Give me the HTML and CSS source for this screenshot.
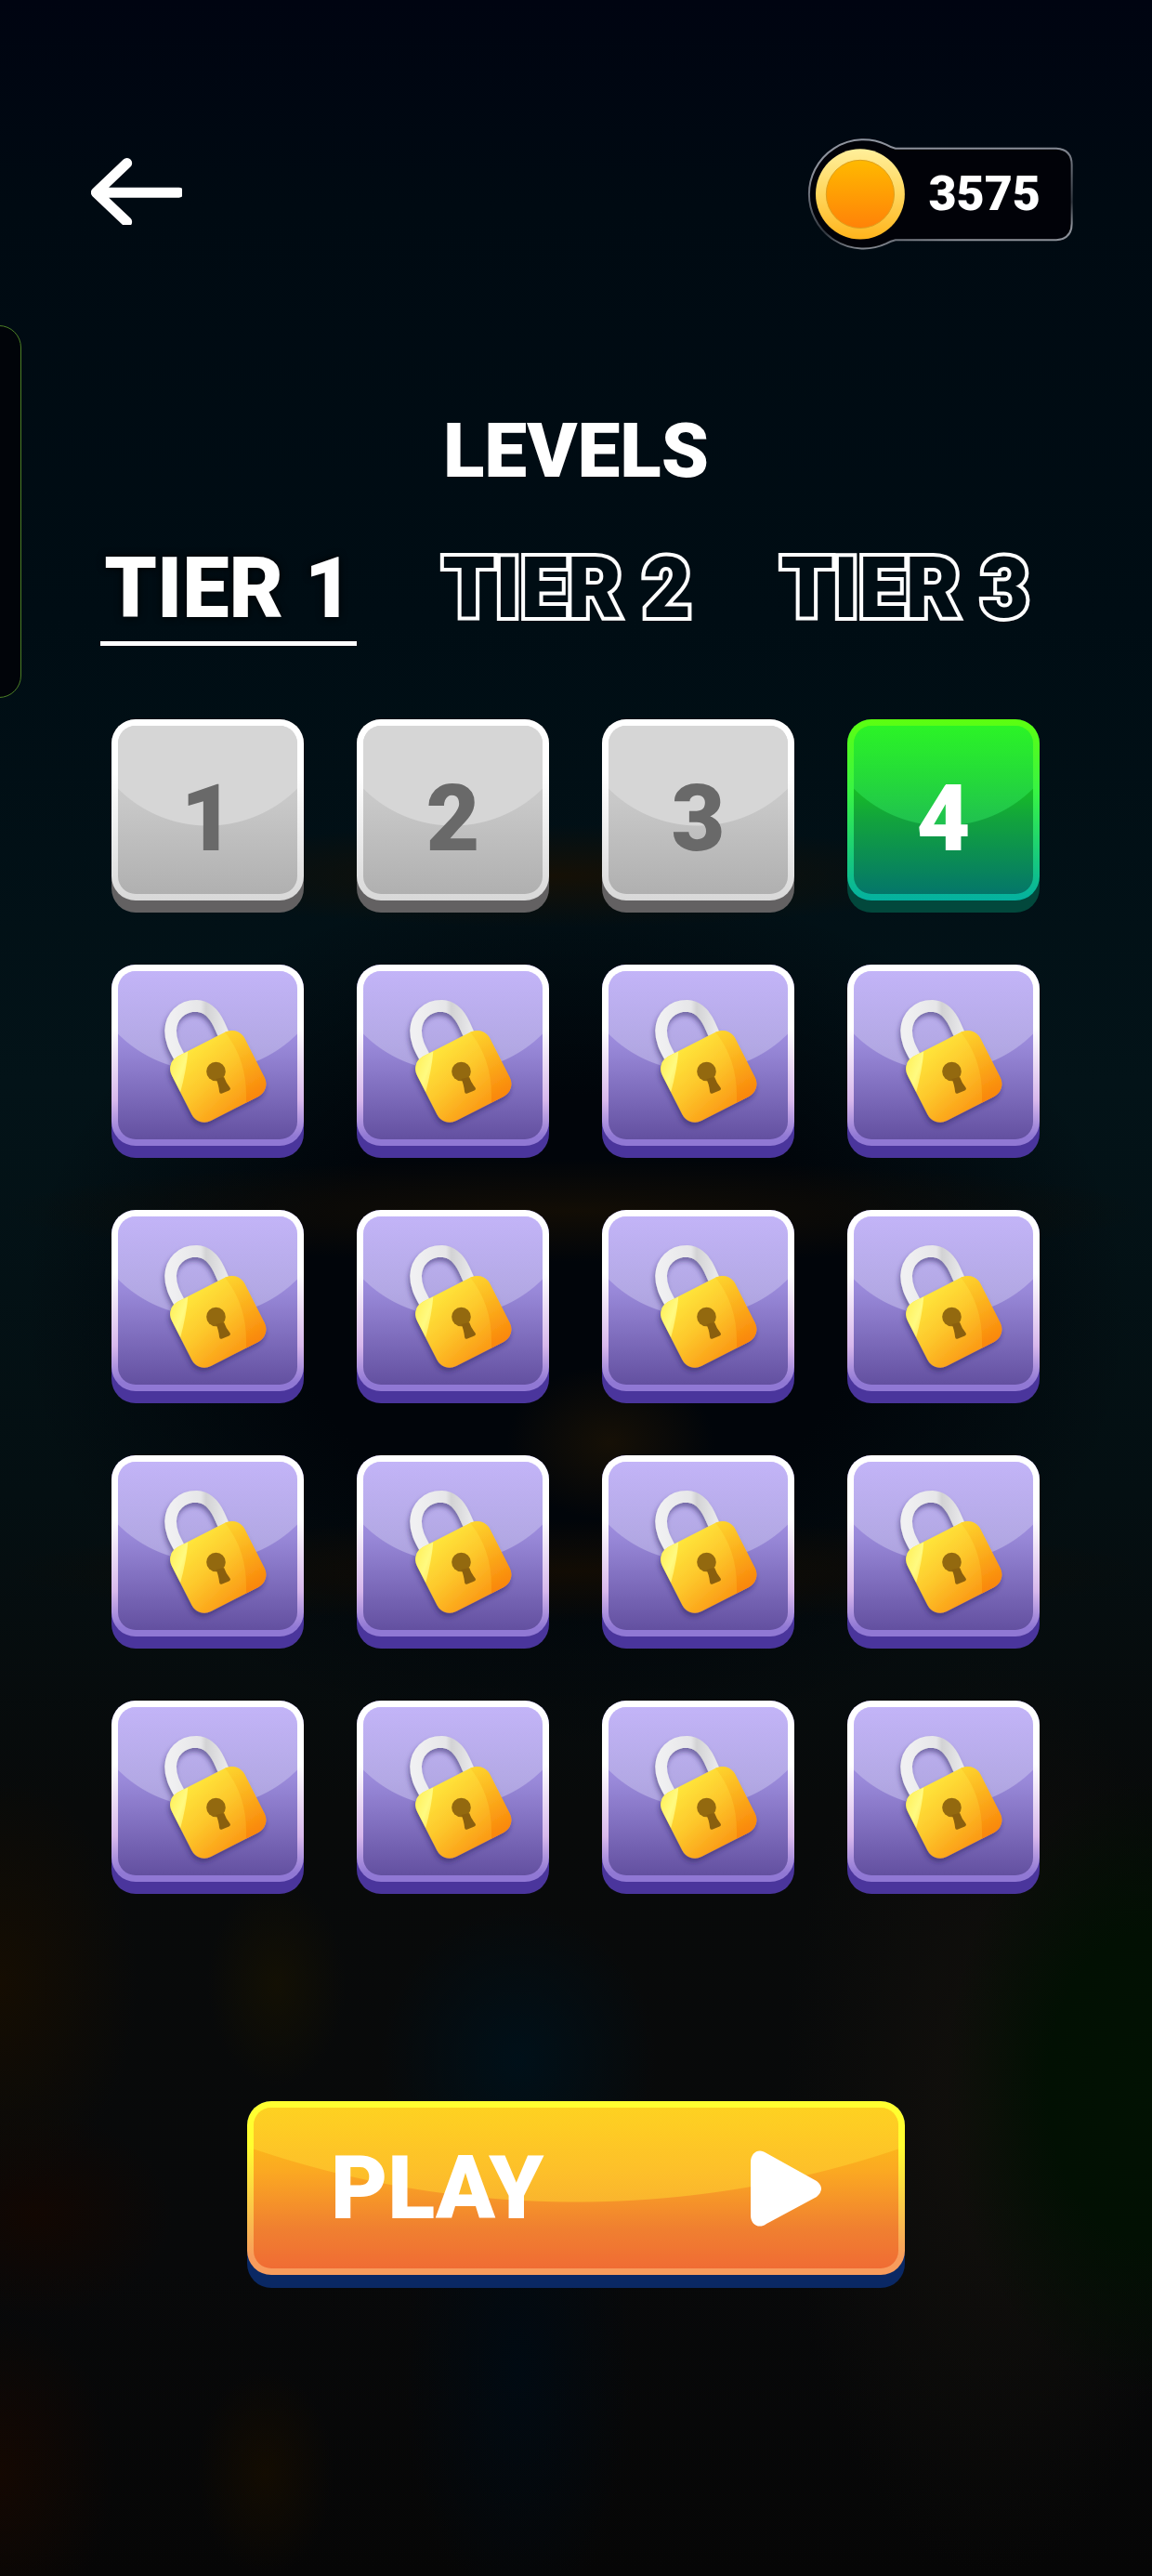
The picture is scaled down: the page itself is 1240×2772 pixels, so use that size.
FILE: index.html
```html
<!DOCTYPE html>
<html lang="en">
<head>
<meta charset="utf-8">
<meta name="viewport" content="width=device-width, initial-scale=1">
<title>Levels</title>
<link rel="stylesheet" href="styles.css">
</head>
<body>
<svg class="defs" aria-hidden="true">
  <defs>
    <linearGradient id="body" x1="0.2" y1="0" x2="0.5" y2="1"><stop offset="0" stop-color="#ffe83c"/><stop offset="0.5" stop-color="#fdc82c"/><stop offset="1" stop-color="#fb9c16"/></linearGradient>
    <linearGradient id="edge" x1="0" y1="0" x2="0" y2="1"><stop offset="0" stop-color="#fdd32c"/><stop offset="1" stop-color="#f97f06"/></linearGradient>
    <linearGradient id="shine" x1="0" y1="0" x2="0.7" y2="1"><stop offset="0" stop-color="#ffee50"/><stop offset="0.5" stop-color="#fffa80"/><stop offset="1" stop-color="#ffd83a"/></linearGradient>
    <linearGradient id="steel" x1="0" y1="0" x2="1" y2="0"><stop offset="0" stop-color="#f0f0f2"/><stop offset="0.55" stop-color="#e6e6e8"/><stop offset="0.65" stop-color="#d2d2d4"/><stop offset="1" stop-color="#e8e8ea"/></linearGradient>
    <filter id="drop" x="-20%" y="-20%" width="140%" height="150%"><feDropShadow dx="-4" dy="12" stdDeviation="8" flood-color="#2c1e5c" flood-opacity="0.5"/></filter>
    <clipPath id="bodyClip"><rect x="-132" y="-117" width="264" height="234" rx="46"/></clipPath>
  </defs>
  <symbol id="lock" viewBox="81 76 580 543">
    <g filter="url(#drop)">
      <path d="M282 358C262 322 251 300 251 268C253 222 285 188 335 188C375 190 395 220 408 248L428 292" fill="none" stroke="url(#steel)" stroke-width="38"/>
      <g transform="translate(405 416) rotate(-27)">
        <rect x="-132" y="-117" width="264" height="234" rx="46" fill="url(#body)"/>
        <g clip-path="url(#bodyClip)">
          <path d="M84 -120Q110 0 40 120H140V-120Z" fill="url(#edge)" opacity="0.75"/>
          <path d="M-132 -10V-70Q-132 -117 -84 -117H-50Q-82 -65 -132 -10Z" fill="url(#shine)"/>
        </g>
      </g>
    </g>
    <circle cx="398" cy="400" r="31" fill="#93690f"/>
    <path d="M398 424Q406 440 409 466Q411 474 418 471L440 462Q447 458 443 452Q430 436 424 418Z" fill="#8a5f0e"/>
  </symbol>
</svg>

<aside class="side-panel" aria-hidden="true"></aside>

<main class="screen">
  <header class="top-bar">
    <button class="back" type="button" aria-label="Back">
      <svg viewBox="114 118 294 215" aria-hidden="true"><path d="M230 134L130 229L230 324M132 229H398" fill="none" stroke="#fff" stroke-width="33" stroke-linecap="round" stroke-linejoin="round"/><path d="M118 229L150 200V258Z" fill="#fff"/></svg>
    </button>
    <div class="coins">
      <svg class="coins-frame" viewBox="60 52 862 364" aria-hidden="true">
        <defs>
          <linearGradient id="frame" x1="0" y1="0" x2="0.3" y2="1"><stop offset="0" stop-color="#9095a0"/><stop offset="0.3" stop-color="#8a8e98"/><stop offset="0.8" stop-color="#30363e"/><stop offset="1" stop-color="#8c9098"/></linearGradient>
          <linearGradient id="rim" x1="0" y1="0" x2="0" y2="1"><stop offset="0" stop-color="#ffef9a"/><stop offset="0.5" stop-color="#ffd65c"/><stop offset="1" stop-color="#ffb41c"/></linearGradient>
          <linearGradient id="coin" x1="0" y1="0" x2="0" y2="1"><stop offset="0" stop-color="#ffb900"/><stop offset="1" stop-color="#ff8208"/></linearGradient>
        </defs>
        <path d="M345 87H865Q915 90 915 140V330Q915 380 865 383H345Q330 386 315 395A176 176 0 1 1 315 75Q330 84 345 87Z" fill="#010208" stroke="url(#frame)" stroke-width="6"/>
        <ellipse cx="231" cy="235" rx="144" ry="146" fill="url(#rim)"/>
        <circle cx="231" cy="235" r="110" fill="url(#coin)" stroke="#dda01e" stroke-width="3"/>
      </svg>
      <span class="coins-value">3575</span>
    </div>
  </header>

  <h1 class="title">LEVELS</h1>

  <nav class="tiers" aria-label="Tiers">
    <button class="tier tier-active" type="button" aria-current="true">TIER 1</button>
    <button class="tier" type="button">TIER 2</button>
    <button class="tier" type="button">TIER 3</button>
  </nav>

  <section class="levels" aria-label="Levels">
    <button class="level done" type="button"><span class="face">1</span></button>
    <button class="level done" type="button"><span class="face">2</span></button>
    <button class="level done" type="button"><span class="face">3</span></button>
    <button class="level current" type="button"><span class="face">4</span></button>
    <button class="level locked" type="button" aria-label="Level 5, locked"><span class="face"><svg><use href="#lock"/></svg></span></button>
    <button class="level locked" type="button" aria-label="Level 6, locked"><span class="face"><svg><use href="#lock"/></svg></span></button>
    <button class="level locked" type="button" aria-label="Level 7, locked"><span class="face"><svg><use href="#lock"/></svg></span></button>
    <button class="level locked" type="button" aria-label="Level 8, locked"><span class="face"><svg><use href="#lock"/></svg></span></button>
    <button class="level locked" type="button" aria-label="Level 9, locked"><span class="face"><svg><use href="#lock"/></svg></span></button>
    <button class="level locked" type="button" aria-label="Level 10, locked"><span class="face"><svg><use href="#lock"/></svg></span></button>
    <button class="level locked" type="button" aria-label="Level 11, locked"><span class="face"><svg><use href="#lock"/></svg></span></button>
    <button class="level locked" type="button" aria-label="Level 12, locked"><span class="face"><svg><use href="#lock"/></svg></span></button>
    <button class="level locked" type="button" aria-label="Level 13, locked"><span class="face"><svg><use href="#lock"/></svg></span></button>
    <button class="level locked" type="button" aria-label="Level 14, locked"><span class="face"><svg><use href="#lock"/></svg></span></button>
    <button class="level locked" type="button" aria-label="Level 15, locked"><span class="face"><svg><use href="#lock"/></svg></span></button>
    <button class="level locked" type="button" aria-label="Level 16, locked"><span class="face"><svg><use href="#lock"/></svg></span></button>
    <button class="level locked" type="button" aria-label="Level 17, locked"><span class="face"><svg><use href="#lock"/></svg></span></button>
    <button class="level locked" type="button" aria-label="Level 18, locked"><span class="face"><svg><use href="#lock"/></svg></span></button>
    <button class="level locked" type="button" aria-label="Level 19, locked"><span class="face"><svg><use href="#lock"/></svg></span></button>
    <button class="level locked" type="button" aria-label="Level 20, locked"><span class="face"><svg><use href="#lock"/></svg></span></button>
  </section>

  <button class="play" type="button">
    <span class="play-face">
      <span>PLAY</span>
      <svg viewBox="0 0 76 82" aria-hidden="true"><path d="M0 13C0 2 9 -3 17 3L71 33Q81 41 71 50L17 79C9 85 0 80 0 70Z" fill="#fff"/></svg>
    </span>
  </button>
</main>
</body>
</html>
```
FILE: styles.css
```css
* {
  box-sizing: border-box;
}

body {
  margin: 0;
  min-height: 100vh;
  color: #fff;
  font-family: Roboto, "Liberation Sans", sans-serif;
  font-weight: 900;
  background:
    radial-gradient(ellipse 9% 3% at 53% 56%, #161006 0%, transparent 100%),
    radial-gradient(ellipse 50% 2% at 50% 47%, #120d05 0%, transparent 100%),
    radial-gradient(ellipse 50% 2% at 50% 61%, #120c04 0%, transparent 100%),
    radial-gradient(ellipse 36% 2% at 48% 34%, #151006 0%, transparent 100%),
    radial-gradient(ellipse 48% 17% at 50% 51%, #01050a 0%, #01050a 50%, transparent 100%),
    radial-gradient(ellipse 12% 8% at 0% 77%, #150d02 0%, transparent 100%),
    radial-gradient(ellipse 12% 4% at 3% 86%, #120702 0%, transparent 100%),
    radial-gradient(ellipse 10% 6% at 0% 96%, #140802 0%, transparent 100%),
    radial-gradient(ellipse 6% 4% at 24% 77%, #131004 0%, transparent 100%),
    radial-gradient(ellipse 6% 4% at 23% 96%, #130c02 0%, transparent 100%),
    radial-gradient(ellipse 18% 12% at 100% 81%, #021203 0%, #021003 50%, transparent 100%),
    radial-gradient(ellipse 18% 18% at 86% 82%, #12100c 0%, transparent 100%),
    radial-gradient(ellipse 12% 6% at 45% 80%, #001019 0%, transparent 100%),
    radial-gradient(ellipse 10% 10% at 45% 92%, #010a12 0%, transparent 100%),
    linear-gradient(#000411 0%, #000a12 8%, #000d14 24%, #031318 42%, #040f12 58%, #080a0a 70%, #08090a 88%, #060606 100%);
}

button {
  margin: 0;
  padding: 0;
  border: 0;
  color: inherit;
  font: inherit;
  background: none;
  cursor: pointer;
}

svg {
  display: block;
}

.defs {
  position: absolute;
  width: 0;
  height: 0;
}

.side-panel {
  position: absolute;
  top: 350px;
  left: -40px;
  width: 63px;
  height: 401px;
  border: 1px solid #4c7f26;
  border-radius: 24px;
  background: #010409;
}

.screen {
  display: flex;
  flex-direction: column;
  align-items: stretch;
  padding: 148px 84px 308px;
}

.top-bar {
  display: flex;
  align-items: center;
  justify-content: space-between;
  padding-left: 14px;
}

.back {
  padding-bottom: 6px;
}

.back svg {
  width: 98px;
  height: 72px;
}

.coins {
  position: relative;
  display: flex;
  align-items: center;
  justify-content: flex-end;
  width: 287px;
  height: 121px;
  padding-right: 36px;
}

.coins-frame {
  position: absolute;
  inset: 0;
}

.coins-value {
  position: relative;
  font-size: 52px;
  line-height: 60px;
}

.title {
  margin: 168px 0 0;
  font-size: 82px;
  line-height: 96px;
  font-weight: 900;
  text-align: center;
}

.tiers {
  display: grid;
  grid-template-columns: repeat(3, 1fr);
  gap: 88px;
  padding: 0 44px 0 24px;
  margin-top: 48px;
}

.tier {
  height: 114px;
  padding-bottom: 4px;
  border-bottom: 5px solid transparent;
  font-size: 90px;
  line-height: 100px;
  white-space: nowrap;
  color: #000d14;
  -webkit-text-stroke: 8px #fff;
  paint-order: stroke fill;
  stroke-linejoin: round;
}

.tier-active {
  color: #fff;
  border-bottom-color: #fff;
  -webkit-text-stroke: 0;
  text-shadow: 0 0 8px #000;
}

.levels {
  display: grid;
  grid-template-columns: repeat(4, 1fr);
  gap: 56px 57px;
  margin-top: 79px;
  padding: 0 37px 0 36px;
}

.level {
  display: flex;
  padding-bottom: 13px;
  border-radius: 26px;
  font-size: 100px;
}

.face {
  display: flex;
  flex: 1;
  align-items: center;
  justify-content: center;
  height: 195px;
  padding-top: 18px;
  border: 7px solid transparent;
  border-radius: 26px;
}

.done {
  color: #696969;
  background: #636162;
}

.done .face {
  background:
    radial-gradient(circle at 50% -29px, #d6d6d6 136px, transparent 137px) padding-box,
    linear-gradient(#d2d2d2, #c8c8c8 45%, #b0b0b0) padding-box,
    linear-gradient(#fff 30%, #d8d8d8) border-box;
}

.current {
  background: #02483c;
}

.current .face {
  background:
    radial-gradient(circle at 50% -29px, rgba(60, 255, 110, 0.35) 136px, transparent 137px) padding-box,
    linear-gradient(#22ee00, #18c81c 30%, #12a43c 55%, #04766a) padding-box,
    linear-gradient(#5cff10, #38f444 40%, #04b0a0) border-box;
}

.locked {
  background: #4a359c;
}

.locked .face {
  padding: 0;
  background:
    radial-gradient(circle at 50% -29px, rgba(205, 200, 240, 0.5) 136px, transparent 137px) padding-box,
    linear-gradient(#b8a0ff, #9888d8 45%, #6350a0) padding-box,
    linear-gradient(#fff 35%, #d8b8ec 75%, #9078d4 95%) border-box;
}

.locked svg {
  width: 100%;
  height: 100%;
}

.play {
  align-self: center;
  width: 100%;
  max-width: 708px;
  margin-top: 223px;
  padding-bottom: 14px;
  border-radius: 26px;
  background: #0a2864;
}

.play-face {
  display: flex;
  align-items: center;
  justify-content: space-between;
  height: 187px;
  padding: 0 83px;
  border: 7px solid transparent;
  border-radius: 26px;
  font-size: 94px;
  line-height: 110px;
  background:
    radial-gradient(circle at 50% -983px, rgba(255, 215, 50, 0.5) 1084px, transparent 1085px) padding-box,
    linear-gradient(#fccc10, #fba822 40%, #f08030 75%, #f06c34) padding-box,
    linear-gradient(#ffff30 25%, #f89c5c 90%) border-box;
}

.play-face svg {
  width: 76px;
  height: 82px;
}
```
